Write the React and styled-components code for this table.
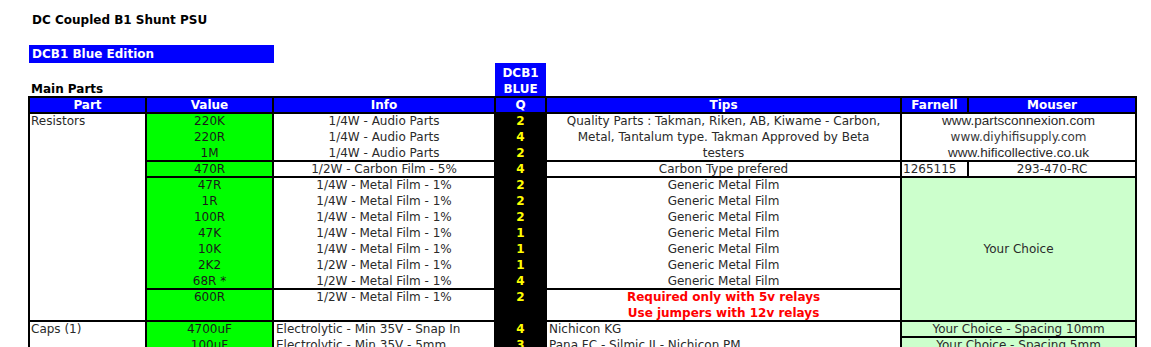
import React from 'react';
import styled, { createGlobalStyle, css } from 'styled-components';

const Global = createGlobalStyle`
  html, body { margin: 0; padding: 0; background: #fff; }
  body {
    font-family: "DejaVu Sans", Verdana, sans-serif;
    font-size: 12px;
    color: #2a2a2a;
  }
`;

const Page = styled.div`
  width: 1151px;
  height: 347px;
  overflow: hidden;
`;

const Title = styled.h1`
  margin: 0 0 17px 32px;
  padding-top: 12px;
  font-size: 12px;
  line-height: 16px;
  font-weight: bold;
  color: #000;
`;

const EditionBar = styled.div`
  margin-left: 29px;
  width: 242px;
  height: 18px;
  padding-left: 3px;
  line-height: 18px;
  background: #0000ff;
  color: #fff;
  font-weight: bold;
`;

const Sheet = styled.table`
  margin-left: 28px;
  border-collapse: collapse;
  table-layout: fixed;
  width: 1109px;
  font-size: 12px;
`;

const PreRow = styled.tr`
  height: ${p => p.$h}px;
`;

const Blank = styled.td`
  padding: 0 0 0 2px;
  border: none;
  vertical-align: bottom;
  text-align: left;
  font-weight: bold;
  color: #000;
  white-space: nowrap;
`;

const tones = {
  plain: css`background: #fff; color: #2a2a2a;`,
  value: css`background: #00ff00; color: #1a1a1a;`,
  q: css`background: #000; color: #ffff00; font-weight: bold;`,
  choice: css`background: #ccffcc; color: #2a2a2a;`,
  head: css`background: #0000ff; color: #fff; font-weight: bold;`,
  warn: css`background: #fff; color: #ff0000; font-weight: bold;`,
};

const Cell = styled.td`
  padding: 0 ${p => p.$pad ?? 0}px;
  border: ${p => (p.$bare ? 'none' : '2px solid #000')};
  text-align: ${p => p.$align || 'center'};
  vertical-align: ${p => p.$valign || 'top'};
  white-space: nowrap;
  ${p => tones[p.$tone || 'plain']}
`;

const HeadCell = styled.th`
  padding: 0;
  border: 2px solid #000;
  text-align: center;
  vertical-align: top;
  white-space: nowrap;
  ${tones.head}
`;

const Lines = styled.div`
  margin: -1px 0;
`;

const Line = styled.div`
  height: 16px;
  line-height: 16px;
  font-family: ${p => (p.$arial ? '"Liberation Sans", Arial, sans-serif' : 'inherit')};
  font-size: ${p => (p.$arial ? '13.5px' : '12px')};
  color: ${p => (p.$muted ? '#3a3a3a' : 'inherit')};
`;

const Stack = ({ items }) => (
  <Lines>
    {items.map((t, i) => (
      <Line key={i}>{t}</Line>
    ))}
  </Lines>
);

const cols = [117, 127, 222, 51, 355, 67, 168];
const heads = ['Part', 'Value', 'Info', 'Q', 'Tips', 'Farnell', 'Mouser'];

export default function App() {
  return (
    <Page>
      <Global />
      <Title>DC Coupled B1 Shunt PSU</Title>
      <EditionBar>DCB1 Blue Edition</EditionBar>
      <Sheet>
        <colgroup>
          {cols.map((w, i) => (
            <col key={i} style={{ width: w }} />
          ))}
        </colgroup>
        <tbody>
          <PreRow $h={18}>
            <Blank colSpan={3} />
            <Cell $bare $tone="head" rowSpan={2} $valign="bottom">
              <Stack items={['DCB1', 'BLUE']} />
            </Cell>
            <Blank colSpan={3} />
          </PreRow>
          <PreRow $h={16}>
            <Blank>Main Parts</Blank>
            <Blank colSpan={2} />
            <Blank colSpan={3} />
          </PreRow>
          <tr>
            {heads.map(h => (
              <HeadCell key={h}>
                <Stack items={[h]} />
              </HeadCell>
            ))}
          </tr>

          <tr>
            <Cell rowSpan={4} $align="left" $pad={1}>
              <Stack items={['Resistors']} />
            </Cell>
            <Cell $tone="value"><Stack items={['220K', '220R', '1M']} /></Cell>
            <Cell><Stack items={['1/4W - Audio Parts', '1/4W - Audio Parts', '1/4W - Audio Parts']} /></Cell>
            <Cell $tone="q"><Stack items={['2', '4', '2']} /></Cell>
            <Cell>
              <Stack
                items={[
                  'Quality Parts : Takman, Riken, AB, Kiwame - Carbon,',
                  'Metal, Tantalum type. Takman Approved by Beta',
                  'testers',
                ]}
              />
            </Cell>
            <Cell colSpan={2}>
              <Lines>
                <Line $arial>www.partsconnexion.com</Line>
                <Line $muted>www.diyhifisupply.com</Line>
                <Line $arial>www.hificollective.co.uk</Line>
              </Lines>
            </Cell>
          </tr>

          <tr>
            <Cell $tone="value"><Stack items={['470R']} /></Cell>
            <Cell><Stack items={['1/2W - Carbon Film - 5%']} /></Cell>
            <Cell $tone="q"><Stack items={['4']} /></Cell>
            <Cell><Stack items={['Carbon Type prefered']} /></Cell>
            <Cell $align="left" $pad={1}><Stack items={['1265115']} /></Cell>
            <Cell><Stack items={['293-470-RC']} /></Cell>
          </tr>

          <tr>
            <Cell $tone="value">
              <Stack items={['47R', '1R', '100R', '47K', '10K', '2K2', '68R *']} />
            </Cell>
            <Cell>
              <Stack
                items={[
                  '1/4W - Metal Film - 1%',
                  '1/4W - Metal Film - 1%',
                  '1/4W - Metal Film - 1%',
                  '1/4W - Metal Film - 1%',
                  '1/4W - Metal Film - 1%',
                  '1/2W - Metal Film - 1%',
                  '1/2W - Metal Film - 1%',
                ]}
              />
            </Cell>
            <Cell $tone="q"><Stack items={['2', '2', '2', '1', '1', '1', '4']} /></Cell>
            <Cell>
              <Stack items={Array(7).fill('Generic Metal Film')} />
            </Cell>
            <Cell $tone="choice" colSpan={2} rowSpan={2} $valign="middle">
              <Stack items={['Your Choice']} />
            </Cell>
          </tr>

          <tr>
            <Cell $tone="value"><Stack items={['600R']} /></Cell>
            <Cell><Stack items={['1/2W - Metal Film - 1%']} /></Cell>
            <Cell $tone="q"><Stack items={['2']} /></Cell>
            <Cell $tone="warn">
              <Stack items={['Required only with 5v relays', 'Use jumpers with 12v relays']} />
            </Cell>
          </tr>

          <tr>
            <Cell rowSpan={2} $align="left" $pad={1}>
              <Stack items={['Caps (1)']} />
            </Cell>
            <Cell $tone="value" rowSpan={2}><Stack items={['4700uF', '100uF']} /></Cell>
            <Cell rowSpan={2} $align="left" $pad={2}>
              <Stack items={['Electrolytic - Min 35V - Snap In', 'Electrolytic - Min 35V - 5mm']} />
            </Cell>
            <Cell $tone="q" rowSpan={2}><Stack items={['4', '3']} /></Cell>
            <Cell rowSpan={2} $align="left" $pad={2}>
              <Stack items={['Nichicon KG', 'Pana FC - Silmic II - Nichicon PM']} />
            </Cell>
            <Cell $tone="choice" colSpan={2}>
              <Stack items={['Your Choice - Spacing 10mm']} />
            </Cell>
          </tr>
          <tr>
            <Cell $tone="choice" colSpan={2}>
              <Stack items={['Your Choice - Spacing 5mm']} />
            </Cell>
          </tr>
        </tbody>
      </Sheet>
    </Page>
  );
}
